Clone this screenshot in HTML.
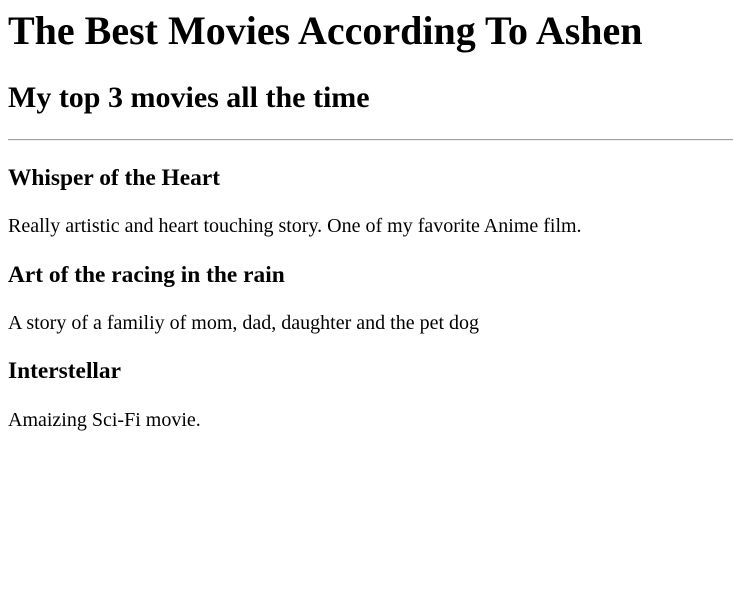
<!DOCTYPE html>
<html><head><meta charset="utf-8"><style>
html{font-size:20px;background:#fff}
body{margin:0;padding:0 8px;position:relative;top:-20px;font-family:"Liberation Serif",serif;font-size:20px;color:#000}
h1{font-size:2em;margin:0.67em 0}
h2{font-size:1.5em;margin:0.83em 0}
h3{font-size:1.17em;margin:1em 0}
p{margin:1em 0}
hr{margin:0.5em -8px 0.5em 0;border:0;border-top:1px solid #a0a0a0;border-bottom:1px solid #f0f0f0;height:0}
</style></head><body>
<h1>The Best Movies According To Ashen</h1>
<h2>My top 3 movies all the time</h2>
<hr>
<h3>Whisper of the Heart</h3>
<p>Really artistic and heart touching story. One of my favorite Anime film.</p>
<h3>Art of the racing in the rain</h3>
<p>A story of a familiy of mom, dad, daughter and the pet dog</p>
<h3>Interstellar</h3>
<p>Amaizing Sci-Fi movie.</p>
</body></html>
